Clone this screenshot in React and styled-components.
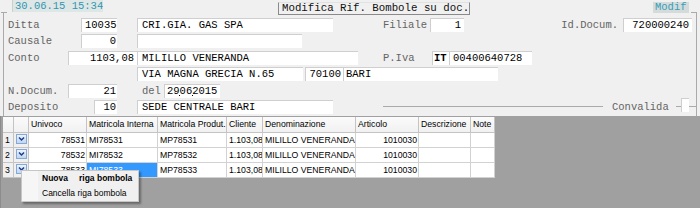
import React from 'react';
import styled, { createGlobalStyle } from 'styled-components';

const mono = `"Liberation Mono", "DejaVu Sans Mono", monospace`;
const sans = `"Liberation Sans", Arial, sans-serif`;

const GlobalStyle = createGlobalStyle`
  html, body { margin: 0; padding: 0; background: #f0f0f0; }
  body { width: 700px; height: 208px; overflow: hidden; }
`;

const bombole = [
  { n: 1, univoco: '78531', interna: 'MI78531', produt: 'MP78531', cliente: '1.103,08', denom: 'MILILLO VENERANDA', articolo: '1010030' },
  { n: 2, univoco: '78532', interna: 'MI78532', produt: 'MP78532', cliente: '1.103,08', denom: 'MILILLO VENERANDA', articolo: '1010030' },
  { n: 3, univoco: '78533', interna: 'MI78533', produt: 'MP78533', cliente: '1.103,08', denom: 'MILILLO VENERANDA', articolo: '1010030', selected: true },
];

const columns = ['', '', 'Univoco', 'Matricola Interna', 'Matricola Produt.', 'Cliente', 'Denominazione', 'Articolo', 'Descrizione', 'Note'];

const Screen = styled.div`
  position: relative;
  width: 700px;
  height: 208px;
  display: flex;
  flex-direction: column;
  background: #f0f0f0;
  font-family: ${mono};
  font-size: 10.5px;
  overflow: hidden;
`;

const TopBar = styled.div`
  display: flex;
  align-items: flex-start;
  height: 12px;
  position: relative;
  z-index: 1;
`;

const DateBox = styled.div`
  margin-left: 12px;
  width: 91px;
  height: 12px;
  box-sizing: border-box;
  padding-left: 2px;
  line-height: 12px;
  background: #dfe6e6;
  border-left: 1px solid #c9d2d2;
  color: #2f97b0;
  white-space: nowrap;
  overflow: hidden;
`;

const TitleBox = styled.div`
  margin: 2px 0 0 175px;
  width: 192px;
  height: 13px;
  box-sizing: border-box;
  padding-left: 3px;
  line-height: 11px;
  font-size: 10.75px;
  color: #111;
  background: #f0f0f0;
  border: 1px solid #8a8a8a;
  border-top-color: #e2e2e2;
  white-space: pre;
  overflow: hidden;
`;

const ModeBox = styled.div`
  margin: 2px 0 0 183px;
  width: 36px;
  height: 11px;
  box-sizing: border-box;
  padding-left: 2px;
  line-height: 11px;
  background: #d5dbdb;
  color: #35a0b8;
  white-space: nowrap;
`;

const Frame = styled.div`
  position: relative;
  margin-left: 3px;
  width: 694px;
  height: 104px;
  box-sizing: border-box;
  border-left: 1px solid #aaaaaa;
  border-right: 1px solid #aaaaaa;
  padding: 6px 0 0 4px;
  display: flex;
  flex-direction: column;
  gap: 2.4px;

  &::before, &::after {
    content: '';
    position: absolute;
    top: 0;
    width: 6px;
    height: 1px;
    background: #aaaaaa;
  }
  &::before { left: -3px; }
  &::after { right: -1px; }
`;

const FormRow = styled.div`
  display: flex;
  align-items: center;
  height: 14px;
`;

const Label = styled.span`
  flex: none;
  width: ${(p) => p.$w}px;
  margin-left: ${(p) => p.$ml || 0}px;
  text-align: ${(p) => (p.$right ? 'right' : 'left')};
  color: #646464;
  white-space: pre;
  line-height: 14px;
`;

const Field = styled.div`
  flex: none;
  width: ${(p) => p.$w}px;
  margin-left: ${(p) => p.$ml || 0}px;
  height: 14px;
  box-sizing: border-box;
  padding: 0 ${(p) => (p.$pr ?? 2)}px 0 ${(p) => (p.$pl ?? 3)}px;
  background: #fff;
  border-top: 1px solid #cfcfcf;
  border-left: 1px solid #cfcfcf;
  line-height: 13px;
  color: #000;
  font-weight: ${(p) => (p.$bold ? 700 : 400)};
  text-align: ${(p) => (p.$right ? 'right' : 'left')};
  white-space: pre;
  overflow: hidden;
`;

const DateMark = styled.span`
  display: inline-block;
  width: 1px;
  height: 1px;
  margin: 0 -0.5px;
  background: #000;
  vertical-align: -2px;
`;

const Rule = styled.div`
  flex: none;
  width: ${(p) => p.$w}px;
  margin-left: ${(p) => p.$ml || 0}px;
  height: 1px;
  background: #aaaaaa;
`;

const CheckBox = styled.div`
  flex: none;
  width: 8px;
  height: 14px;
  margin-top: -4px;
  box-sizing: border-box;
  background: #fff;
  border-top: 1px solid #cfcfcf;
  border-left: 1px solid #cfcfcf;
`;

const GridArea = styled.div`
  position: relative;
  flex: 1;
  background: #a0a0a0;
  padding: 1px 0 0 3px;
  border-left: 1px solid #8c8c8c;
`;

const Table = styled.div`
  display: grid;
  width: max-content;
  grid-template-columns: 11px 15px 58px 71px 69px 36px 93px 63px 52px 24px;
  grid-template-rows: 16px;
  grid-auto-rows: 15px;
  margin-left: -1px;
  font-family: ${sans};
  font-size: 8.7px;
  color: #000;
`;

const Cell = styled.div`
  box-sizing: border-box;
  border-right: 1px solid #d2d2d2;
  border-bottom: 1px solid #d2d2d2;
  background: ${(p) => (p.$selected ? '#3399ff' : '#fff')};
  color: ${(p) => (p.$selected ? '#fff' : '#000')};
  padding: 0 1px 0 2px;
  line-height: 14px;
  text-align: ${(p) => (p.$right ? 'right' : 'left')};
  white-space: nowrap;
  overflow: hidden;
`;

const HeadCell = styled(Cell)`
  background: linear-gradient(#fbfbfb, #f1f1f1);
  border-color: #c4c4c4;
  padding-left: 2px;
  line-height: 15px;
`;

const NumCell = styled(Cell)`
  background: #f0f0f0;
  border-color: #c4c4c4;
  padding-left: 2px;
`;

const ButtonCell = styled(Cell)`
  background: #f0f0f0;
  border-color: #c4c4c4;
  padding: 1px 0 0 2px;
  line-height: 0;
`;

const Menu = styled.div`
  position: absolute;
  left: 20px;
  top: 54px;
  width: 118px;
  box-sizing: border-box;
  border: 1px solid #c6c6c6;
  background: linear-gradient(to right, #f6f6f6 0 16px, #f0f0f0 16px);
  box-shadow: 2px 2px 2px rgba(0, 0, 0, 0.35);
  font-family: ${sans};
  font-size: 8.5px;
`;

const MenuItem = styled.div`
  height: 15px;
  line-height: 15px;
  padding-left: 20px;
  font-weight: ${(p) => (p.$bold ? 700 : 400)};
  white-space: pre;
  color: #000;
`;

const MenuGap = styled.span`
  display: inline-block;
  width: 11px;
`;

const RowButton = () => (
  <svg width="11" height="10" viewBox="0 0 11 10">
    <defs>
      <linearGradient id="rb" x1="0" y1="0" x2="0" y2="1">
        <stop offset="0" stopColor="#eef5fd" />
        <stop offset="1" stopColor="#bcd5f0" />
      </linearGradient>
    </defs>
    <rect x="0.5" y="0.5" width="10" height="9" fill="url(#rb)" stroke="#86a8d4" />
    <path d="M3 3.5 L5.5 6 L8 3.5" fill="none" stroke="#1c3c8c" strokeWidth="1.5" />
  </svg>
);

export default function App() {
  return (
    <Screen>
      <GlobalStyle />
      <TopBar>
        <DateBox>30.06.15 15:34</DateBox>
        <TitleBox>Modifica Rif. Bombole su doc.</TitleBox>
        <ModeBox>Modif</ModeBox>
      </TopBar>

      <Frame>
        <FormRow>
          <Label $w={73}>Ditta</Label>
          <Field $w={36} $right $pr={1}>10035</Field>
          <Field $w={196} $ml={20} $pl={4}>CRI.GIA. GAS SPA</Field>
          <Label $w={94} $right>Filiale</Label>
          <Field $w={34} $ml={3} $right $pr={3}>1</Field>
          <Label $w={154} $right>Id.Docum.</Label>
          <Field $w={69} $ml={5} $right $pr={3}>720000240</Field>
        </FormRow>
        <FormRow>
          <Label $w={73}>Causale</Label>
          <Field $w={36} $right $pr={1}>0</Field>
          <Field $w={165} $ml={20} />
        </FormRow>
        <FormRow>
          <Label $w={60}>Conto</Label>
          <Field $w={69} $right $pr={3}>1103,08</Field>
          <Field $w={221} $pl={4}>MILILLO VENERANDA</Field>
          <Label $w={49} $ml={25}>P.Iva</Label>
          <Field $w={17} $bold $pl={1}>IT</Field>
          <Field $w={83}>00400640728</Field>
        </FormRow>
        <FormRow>
          <Field $w={166} $ml={129} $pl={4}>VIA MAGNA GRECIA N.65</Field>
          <Field $w={38} $ml={2} $right $pr={2}>70100</Field>
          <Field $w={155} $pl={2}>BARI</Field>
        </FormRow>
        <FormRow>
          <Label $w={60}>N.Docum.</Label>
          <Field $w={49} $right $pr={1}>21</Field>
          <Label $w={22} $ml={25}>del</Label>
          <Field $w={56} $pl={2}>29<DateMark />06<DateMark />2015</Field>
        </FormRow>
        <FormRow>
          <Label $w={86}>Deposito</Label>
          <Field $w={23} $right $pr={1}>10</Field>
          <Field $w={196} $ml={20} $pl={4}>SEDE CENTRALE BARI</Field>
          <Rule $w={220} $ml={50} />
          <Label $w={56} $ml={9}>Convalida</Label>
          <Rule $w={5} $ml={8} />
          <CheckBox />
          <Rule $w={7} />
        </FormRow>
      </Frame>

      <GridArea>
        <Table>
          {columns.map((c, i) => (
            <HeadCell key={i}>{c}</HeadCell>
          ))}
          {bombole.map((b) => (
            <React.Fragment key={b.n}>
              <NumCell>{b.n}</NumCell>
              <ButtonCell><RowButton /></ButtonCell>
              <Cell $right>{b.univoco}</Cell>
              <Cell $selected={b.selected}>{b.interna}</Cell>
              <Cell>{b.produt}</Cell>
              <Cell $right>{b.cliente}</Cell>
              <Cell>{b.denom}</Cell>
              <Cell $right>{b.articolo}</Cell>
              <Cell />
              <Cell />
            </React.Fragment>
          ))}
        </Table>

        <Menu>
          <MenuItem $bold>Nuova<MenuGap />riga bombola</MenuItem>
          <MenuItem>Cancella riga bombola</MenuItem>
        </Menu>
      </GridArea>
    </Screen>
  );
}
